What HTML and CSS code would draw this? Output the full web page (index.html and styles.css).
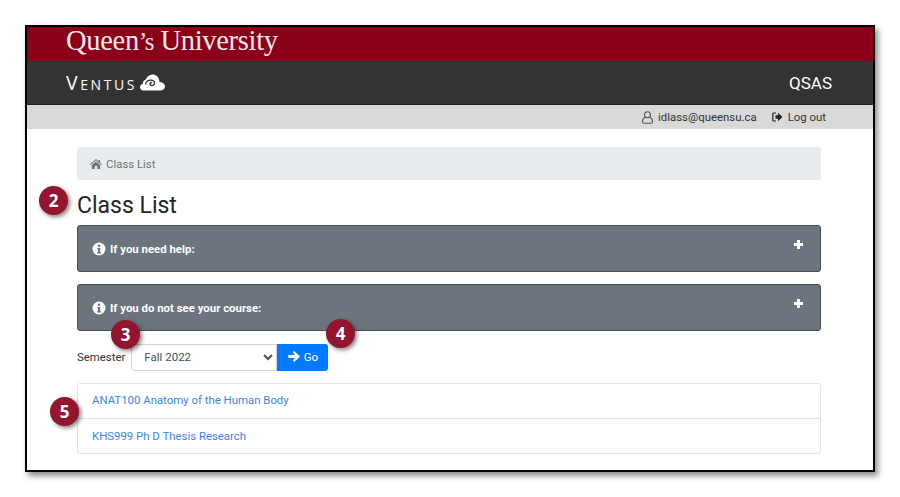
FILE: index.html
```html
<!DOCTYPE html>
<html lang="en">
<head>
<meta charset="utf-8">
<title>Class List</title>
<link rel="stylesheet" href="styles.css">
</head>
<body>
<div class="frame">
  <header class="brand"><span class="brand-name">Queen<span class="apos">’s</span> University</span></header>
  <div class="appbar">
    <div class="ventus">
      <span class="ventus-text">Ventus</span>
      <svg class="cloud" width="25" height="17" viewBox="0 0 25 17"><path fill="#fff" d="M3.500 16.500C1.500 16.500 0 15 0 13.200 0 11.500 1.200 10.200 2.800 10 2.600 8 3.800 6.300 5.700 5.800 6.800 2.600 9.500.500 12.500.500c3.500 0 6.200 2.400 6.700 5.600 .1.700.1 1.100 0 1.700C22.300 8 25 10 25 12.600c0 2.300-2 3.900-4.300 3.900z"/><path fill="none" stroke="#333" stroke-width="1.300" d="M5.500 10.500C6 8 8 6.200 10.500 6.200c2.300 0 4 1.300 4 3 0 1.500-1.500 2.500-2.900 2.300-1.300-.2-2-1.300-1.500-2.200 .4-.7 1.300-.8 1.900-.4"/></svg>
    </div>
    <span class="app-name">QSAS</span>
  </div>
  <div class="userbar">
    <span class="user-item">
      <svg width="11" height="13" viewBox="0 0 11 13"><circle cx="5.500" cy="3.700" r="3" fill="none" stroke="#555" stroke-width="1.100"/><path fill="none" stroke="#555" stroke-width="1.100" d="M3 6.500C1.500 7 .6 8.200.6 9.800V11a1.200 1.200 0 0 0 1.200 1.200h7.400A1.200 1.200 0 0 0 10.400 11V9.800C10.400 8.200 9.500 7 8 6.500"/></svg>
      idlass@queensu.ca
    </span>
    <span class="user-item logout">
      <svg width="11" height="10" viewBox="0 0 11 10"><path fill="none" stroke="#222" stroke-width="1.200" d="M4 1H1.800A1 1 0 0 0 .8 2v6a1 1 0 0 0 1 1H4"/><path fill="#222" d="M3.500 3.300H6V.8L10.500 5 6 9.200V6.700H3.500z"/></svg>
      Log out
    </span>
  </div>
  <main class="content">
    <nav class="crumb">
      <svg width="12" height="10" viewBox="0 0 12 10"><path fill="#6c757d" d="M6 0 8.500 2.200V1H10v2.500L12 5.300l-.6.700L6 1.300.6 6 0 5.300zM1.800 6 6 2.400 10.200 6v3.400a.5.5 0 0 1-.5.5H7.300V7H4.700v2.900H2.300a.5.5 0 0 1-.5-.5z"/></svg>
      <span>Class List</span>
    </nav>
    <h1 class="title">Class List</h1>
    <section class="panel">
      <span class="panel-label">
        <svg class="info" width="14" height="14" viewBox="0 0 14 14"><circle cx="7" cy="7" r="6.500" fill="#fff"/><circle cx="7" cy="3.800" r="1.300" fill="#6c757d"/><path fill="#6c757d" d="M5.300 6h2.900v4.200h1v1.200H5v-1.200h1V7.200h-.7z"/></svg>
        If you need help:
      </span>
      <span class="plus"></span>
    </section>
    <section class="panel">
      <span class="panel-label">
        <svg class="info" width="14" height="14" viewBox="0 0 14 14"><circle cx="7" cy="7" r="6.500" fill="#fff"/><circle cx="7" cy="3.800" r="1.300" fill="#6c757d"/><path fill="#6c757d" d="M5.300 6h2.900v4.200h1v1.200H5v-1.200h1V7.200h-.7z"/></svg>
        If you do not see your course:
      </span>
      <span class="plus"></span>
    </section>
    <form class="semester">
      <label class="semester-label" for="sem">Semester</label>
      <select class="semester-select" id="sem"><option>Fall 2022</option></select>
      <button class="go" type="button">
        <svg width="12" height="11" viewBox="0 0 12 11"><path fill="#fff" d="M6.300 0 12 5.500 6.300 11 4.700 9.400 6.900 7H.3V4h6.600L4.700 1.600z"/></svg>
        Go
      </button>
    </form>
    <ul class="courses">
      <li class="course"><a href="#">ANAT100 Anatomy of the Human Body</a></li>
      <li class="course"><a href="#">KHS999 Ph D Thesis Research</a></li>
    </ul>
  </main>
  <span class="badge b2">2</span>
  <span class="badge b3">3</span>
  <span class="badge b4">4</span>
  <span class="badge b5">5</span>
</div>
</body>
</html>
```
FILE: styles.css
```css
* { box-sizing: border-box; }
html, body { margin: 0; height: 100%; background: #fff; overflow: hidden; }
body { padding: 25px 25px 0; font-family: Roboto, "Liberation Sans", sans-serif; }
.frame {
  position: relative;
  width: 850px;
  height: 447px;
  border: 2px solid #000;
  box-shadow: 3px 4px 6px rgba(0,0,0,.45);
  background: #fff;
}
.brand { height: 34px; background: #8a0019; padding-left: 39px; }
.brand-name {
  display: block;
  font-family: "Liberation Serif", serif;
  font-size: 28.500px;
  line-height: 28px;
  color: #f6e8e8;
  letter-spacing: -.3px;
}
.apos { font-size: 25px; letter-spacing: -1px; }
.appbar {
  height: 44px;
  background: #333;
  border-bottom: 1px solid #222;
  display: flex;
  align-items: center;
  justify-content: space-between;
  padding: 0 41px 0 39px;
}
.ventus { display: flex; align-items: center; gap: 3px; }
.ventus-text {
  font-family: "Open Sans", sans-serif;
  font-weight: 400;
  font-variant: small-caps;
  font-size: 19.500px;
  line-height: 20px;
  letter-spacing: 2.600px;
  color: #fff;
}
.cloud { display: block; margin-top: -1px; }
.app-name { color: #fff; font-size: 17px; font-weight: 400; }
.userbar {
  height: 24px;
  background: #d9d9d9;
  display: flex;
  align-items: center;
  justify-content: flex-end;
  gap: 15px;
  padding-right: 47px;
  font-size: 11.400px;
  color: #333;
}
.user-item { display: flex; align-items: center; gap: 5px; }
.content { padding: 18px 52px 0 50px; }
.crumb {
  height: 33px;
  background: #e9ecef;
  border-radius: 3px;
  display: flex;
  align-items: center;
  gap: 4px;
  padding-left: 13px;
  font-size: 11.400px;
  color: #6c757d;
}
.title {
  margin: 12px 0 6px;
  font-size: 23px;
  font-weight: 400;
  line-height: 27px;
  color: #212529;
}
.panel {
  height: 47px;
  background: #6c757d;
  border: 1px solid #454c52;
  border-radius: 3px;
  margin-bottom: 12px;
  padding: 0 17px 0 14px;
  display: flex;
  align-items: center;
  justify-content: space-between;
  color: #fff;
  font-size: 11.400px;
  font-weight: 700;
}
.panel-label { display: flex; align-items: center; gap: 4px; }
.info { display: block; }
.plus {
  width: 9px;
  height: 9px;
  margin-top: -9px;
  background:
    linear-gradient(#fff, #fff) center / 9px 3px no-repeat,
    linear-gradient(#fff, #fff) center / 3px 9px no-repeat;
}
.semester { display: flex; align-items: center; margin: 13px 0 12px; height: 27px; }
.semester-label { font-size: 11.400px; color: #333; margin-right: 6px; padding-bottom: 2px; }
.semester-select {
  width: 146px;
  height: 27px;
  border: 1px solid #ced4da;
  border-radius: 3px 0 0 3px;
  background: #fff;
  padding: 0 0 2px 8px;
  font-family: inherit;
  font-size: 11.500px;
  color: #495057;
}
.go {
  width: 51px;
  height: 27px;
  border: 0;
  border-radius: 0 3px 3px 0;
  background: #007bff;
  color: #fff;
  font-family: inherit;
  font-size: 11.500px;
  font-weight: 400;
  display: flex;
  align-items: center;
  justify-content: center;
  gap: 4px;
  padding: 0 0 2px;
}
.courses {
  list-style: none;
  margin: 0;
  padding: 0;
  border: 1px solid #e3e3e3;
  border-radius: 3px;
}
.course { height: 34px; padding: 0 0 2px 14px; display: flex; align-items: center; font-size: 11.400px; }
.course + .course { height: 35px; padding-bottom: 0; border-top: 1px solid #e3e3e3; }
.course a { color: #3a86f0; text-decoration: none; }
.badge {
  position: absolute;
  width: 29px;
  height: 29px;
  border-radius: 50%;
  background: #93152f;
  color: #fff;
  font-family: "Open Sans", sans-serif;
  font-size: 17px;
  font-weight: 700;
  display: flex;
  align-items: center;
  justify-content: center;
  box-shadow: 2px 2px 4px rgba(0,0,0,.5);
}
.b2 { left: 12px; top: 159px; }
.b3 { left: 84px; top: 293px; }
.b4 { left: 299px; top: 292px; }
.b5 { left: 23px; top: 370px; }
```
